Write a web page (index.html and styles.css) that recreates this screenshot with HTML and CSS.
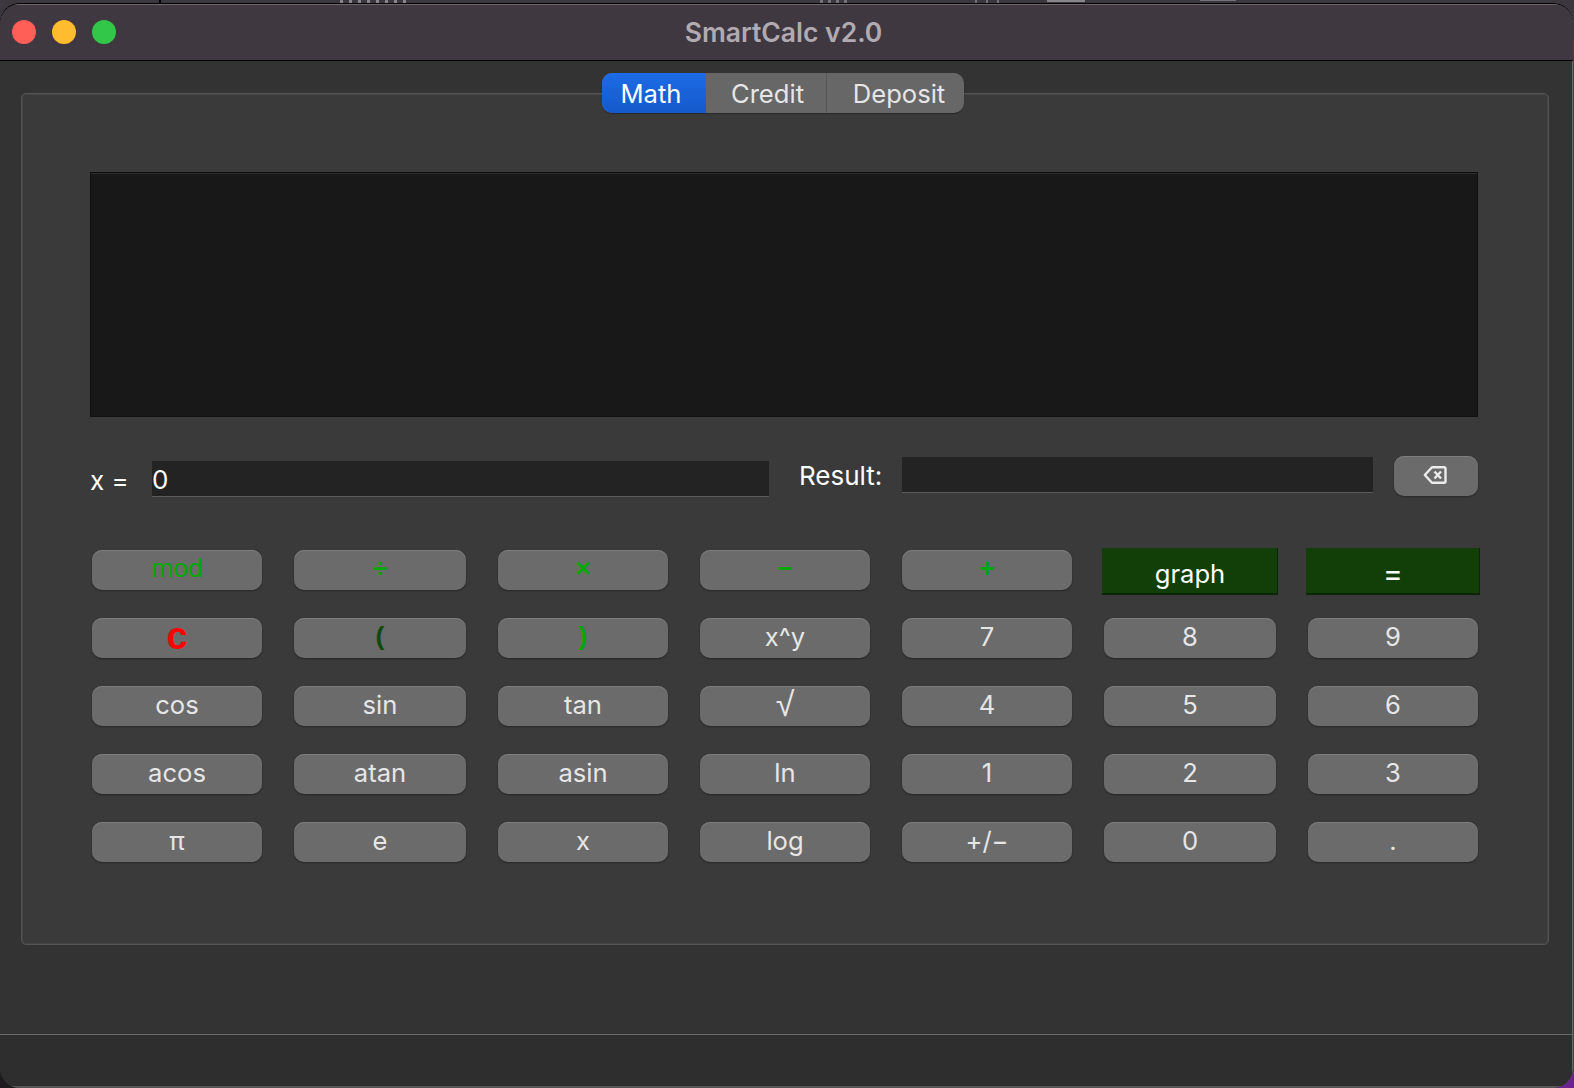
FILE: index.html
```html
<!DOCTYPE html>
<html lang="en">
<head>
  <meta charset="UTF-8" />
  <title>SmartCalc v2.0</title>
  <link rel="stylesheet" href="styles.css">
</head>
<body>
  <!-- what shows of the window behind, above the title bar -->
  <div class="behind">
    <span class="sliver s1"></span>
    <span class="sliver s2"></span>
    <span class="sliver s3"></span>
    <span class="sliver s4"></span>
    <span class="sliver s5"></span>
    <span class="sliver s6"></span>
  </div>

  <div class="window">
    <div class="titlebar">
      <div class="lights">
        <span class="light red"></span>
        <span class="light yellow"></span>
        <span class="light green"></span>
      </div>
      <div class="title">SmartCalc v2.0</div>
    </div>

    <div class="content">
      <div class="tabs">
        <div class="tab active">Math</div>
        <div class="tab credit">Credit</div>
        <div class="tab deposit">Deposit</div>
      </div>

      <div class="group">
        <div class="display"></div>

        <div class="input-row">
          <label class="x-label">x =</label>
          <div class="field x-field">0</div>
          <label class="result-label">Result:</label>
          <div class="field result-field"></div>
          <button class="btn back-btn">
            <svg width="24" height="20" viewBox="0 0 24 20" fill="none" stroke="#ececec" stroke-width="2.4">
              <path d="M9 2.200h12a1.500 1.500 0 0 1 1.500 1.500v12.600a1.500 1.500 0 0 1-1.500 1.500H9L1.800 10z" stroke-linejoin="round"/>
              <path d="M11.500 6.500l6.500 7M18 6.500l-6.500 7"/>
            </svg>
          </button>
        </div>

        <div class="keys">
          <button class="btn op">mod</button>
          <button class="btn op bold">÷</button>
          <button class="btn op bold">×</button>
          <button class="btn op bold">−</button>
          <button class="btn op bold">+</button>
          <button class="btn dark">graph</button>
          <button class="btn dark eq">=</button>

          <button class="btn clear">c</button>
          <button class="btn paren">(</button>
          <button class="btn op bold">)</button>
          <button class="btn">x^y</button>
          <button class="btn">7</button>
          <button class="btn">8</button>
          <button class="btn">9</button>

          <button class="btn">cos</button>
          <button class="btn">sin</button>
          <button class="btn">tan</button>
          <button class="btn root">√</button>
          <button class="btn">4</button>
          <button class="btn">5</button>
          <button class="btn">6</button>

          <button class="btn">acos</button>
          <button class="btn">atan</button>
          <button class="btn">asin</button>
          <button class="btn">ln</button>
          <button class="btn">1</button>
          <button class="btn">2</button>
          <button class="btn">3</button>

          <button class="btn">π</button>
          <button class="btn">e</button>
          <button class="btn">x</button>
          <button class="btn">log</button>
          <button class="btn">+/−</button>
          <button class="btn">0</button>
          <button class="btn">.</button>
        </div>
      </div>
    </div>

    <div class="statusbar"></div>
  </div>
</body>
</html>
```

FILE: styles.css
```css
* {
  box-sizing: border-box;
}

html, body {
  height: 100%;
}

body {
  margin: 0;
  padding-top: 4px;
  overflow: hidden;
  background: linear-gradient(to right, #1d1b1e 50%, #6e2290 50%);
  font-family: Inter, "Noto Sans", sans-serif;
  color: #fff;
}

.behind {
  position: absolute;
  left: 0;
  top: 0;
  width: 100%;
  height: 40px;
  background: #3c363e;
}

.sliver {
  position: absolute;
  top: 0;
  height: 3px;
  background: #8a858b;
}

.s1 { left: 159px; width: 2px; background: #000; }
.s2 { left: 340px; width: 66px; background: repeating-linear-gradient(to right, #8a858b 0 3px, transparent 3px 9px); }
.s3 { left: 820px; width: 30px; background: repeating-linear-gradient(to right, #77717a 0 3px, transparent 3px 8px); }
.s4 { left: 975px; width: 32px; background: repeating-linear-gradient(to right, #77717a 0 2px, transparent 2px 11px); }
.s5 { left: 1047px; width: 38px; height: 2px; background: #8a858b; }
.s6 { left: 1200px; width: 36px; height: 1px; background: #77717a; }

.window {
  position: relative;
  width: 1573px;
  height: 1084px;
  display: flex;
  flex-direction: column;
  overflow: hidden;
  border-radius: 20px;
  background: #333;
  box-shadow: inset -1px 0 0 #666, 0 -1px 0 #000;
}

.titlebar {
  flex: none;
  height: 57px;
  display: flex;
  align-items: center;
  justify-content: center;
  position: relative;
  background: #3f3840;
  border-top: 1px solid #6d676e;
  border-bottom: 1px solid #000;
}

.lights {
  position: absolute;
  left: 12px;
  top: 15px;
  display: flex;
  gap: 16px;
}

.light {
  width: 24px;
  height: 24px;
  border-radius: 50%;
}

.red { background: #ff5f57; }
.yellow { background: #febc2e; }
.green { background: #32c748; }

.title {
  font-size: 26.5px;
  font-weight: 600;
  color: #b1aab1;
  margin-top: -2px;
  padding-right: 6px;
}

.content {
  flex: 1;
  padding: 32px 24px 0 21px;
  position: relative;
}

.tabs {
  position: absolute;
  left: 602px;
  top: 12px;
  z-index: 1;
  width: 362px;
  height: 40px;
  display: flex;
  overflow: hidden;
  border-radius: 10px;
  background: #676767;
  box-shadow: 0 1px 1px rgba(0, 0, 0, 0.3);
}

.tab {
  display: flex;
  align-items: center;
  justify-content: center;
  font-size: 25.6px;
  color: #e6e6e6;
}

.tab.active {
  width: 104px;
  padding-right: 6px;
  color: #fff;
  background: linear-gradient(#1c6ce6, #1559cb);
}

.tab.credit {
  width: 121px;
  padding-left: 3px;
  border-right: 1px solid #575757;
}

.tab.deposit {
  width: 137px;
  padding-left: 7px;
}

.group {
  height: 852px;
  padding: 78px 70px 0 68px;
  background: #3a3a3a;
  border: 1px solid #545454;
  border-radius: 5px;
  box-shadow: inset 0 0 0 1px #444;
}

.display {
  height: 245px;
  background: #181818;
  border: 1px solid #111;
  border-top-color: #0c0c0c;
  box-shadow: inset 0 1px 0 #2b2b2b;
}

.input-row {
  display: flex;
  align-items: flex-start;
  margin-top: 39px;
  height: 40px;
}

.x-label {
  width: 62px;
  margin-top: 9px;
  font-size: 26px;
}

.field {
  height: 36px;
  background: #232323;
  border-bottom: 1px solid #5a5a5a;
  font-size: 26px;
  padding-top: 3px;
}

.x-field {
  width: 617px;
  margin-top: 5px;
}

.result-label {
  width: 133px;
  padding-left: 30px;
  margin-top: 4px;
  font-size: 26px;
}

.result-field {
  width: 471px;
  margin-top: 1px;
}

.btn {
  height: 40px;
  padding: 0 0 4px;
  border: none;
  border-radius: 10px;
  background: #6b6b6b;
  box-shadow: inset 0 1px 0 #7d7d7d, 0 1px 2px rgba(0, 0, 0, 0.35);
  font-family: inherit;
  font-size: 25.6px;
  color: #e6e6e6;
}

.back-btn {
  width: 84px;
  margin-left: 21px;
  padding: 0 2px 3px 0;
  display: flex;
  align-items: center;
  justify-content: center;
}

.keys {
  display: grid;
  grid-template-columns: 170px 172px 170px 170px 170px 172px 170px;
  grid-auto-rows: 40px;
  gap: 28px 32px;
  margin: 54px 0 0 2px;
}

.op {
  font-family: "Liberation Sans", sans-serif;
  font-size: 26.5px;
  color: #00a800;
}

.bold {
  font-weight: 700;
}

.clear {
  font-family: "Liberation Sans", sans-serif;
  font-size: 38px;
  font-weight: 700;
  line-height: 30px;
  color: #ff0000;
}

.paren {
  font-family: "Liberation Sans", sans-serif;
  font-size: 26.5px;
  font-weight: 700;
  color: #0f4a0a;
}

.root {
  font-family: "Liberation Sans", sans-serif;
  font-size: 34px;
  line-height: 30px;
}

.dark {
  height: auto;
  margin: -2px -2px -5px;
  padding: 3px 0 0;
  border-radius: 0;
  background: #113f07;
  box-shadow: inset -1px -2px 0 #0b2604;
  color: #fff;
}

.eq {
  font-size: 30px;
  line-height: 30px;
}

.statusbar {
  position: relative;
  flex: none;
  height: 54px;
  background: #2e2e2e;
  border-top: 1px solid #6a6a6a;
  box-shadow: inset -1px 0 0 #666, inset 0 -2px 0 #555;
}
```
